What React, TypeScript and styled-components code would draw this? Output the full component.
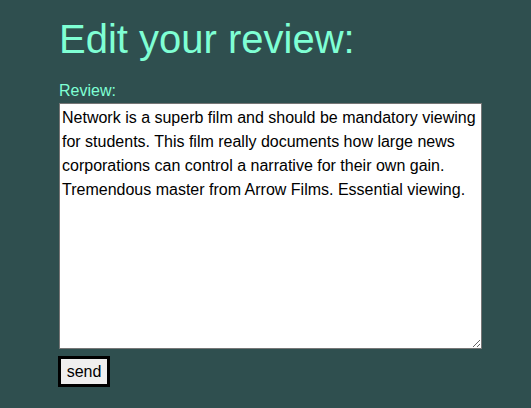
import React from "react";
import styled, { createGlobalStyle } from "styled-components";

const Global = createGlobalStyle`
  html, body { margin: 0; padding: 0; background: #2f4f4f; }
  body { font-family: "Liberation Sans", Arial, sans-serif; }
`;

const Page = styled.main`
  display: flex;
  flex-direction: column;
  align-items: flex-start;
  padding: 16px 0 0 59px;
  min-height: 408px;
  box-sizing: border-box;
`;

const Title = styled.h1`
  margin: 0;
  font-size: 40px;
  font-weight: 400;
  line-height: 46px;
  color: #7fffd4;
`;

const Form = styled.form`
  display: flex;
  flex-direction: column;
  align-items: flex-start;
  margin-top: 20px;
`;

const Label = styled.label`
  font-size: 16px;
  line-height: 18px;
  color: #7fffd4;
`;

const TextArea = styled.textarea`
  margin-top: 3px;
  width: 423px;
  height: 246px;
  box-sizing: border-box;
  padding: 2px;
  border: 1px solid #767676;
  font-family: "Liberation Sans", Arial, sans-serif;
  font-size: 16px;
  line-height: 24px;
  color: #000;
  background: #fff;
  outline: none;
`;

const Button = styled.button`
  margin: 7px 0 0 -1px;
  width: 52px;
  height: 31px;
  box-sizing: border-box;
  padding: 0;
  border: 3px solid #000;
  background: #efefef;
  font-family: "Liberation Sans", Arial, sans-serif;
  font-size: 16px;
  color: #000;
`;

export default function App() {
  return (
    <>
      <Global />
      <Page>
        <Title>Edit your review:</Title>
        <Form onSubmit={(e) => e.preventDefault()}>
          <Label htmlFor="review">Review:</Label>
          <TextArea
            id="review"
            defaultValue="Network is a superb film and should be mandatory viewing for students. This film really documents how large news corporations can control a narrative for their own gain. Tremendous master from Arrow Films. Essential viewing."
          />
          <Button type="submit">send</Button>
        </Form>
      </Page>
    </>
  );
}
